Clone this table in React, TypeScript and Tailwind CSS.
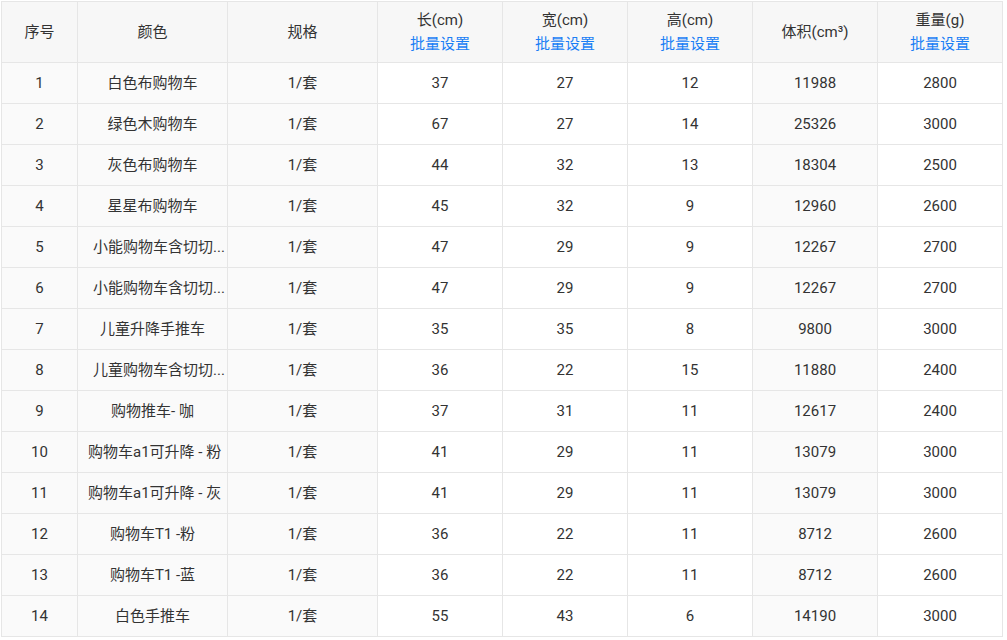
import React from "react";

type Row = {
  id: number;
  name: string;
  length: number;
  width: number;
  height: number;
  volume: number;
  weight: number;
};

const rows: Row[] = [
  { id: 1, name: "白色布购物车", length: 37, width: 27, height: 12, volume: 11988, weight: 2800 },
  { id: 2, name: "绿色木购物车", length: 67, width: 27, height: 14, volume: 25326, weight: 3000 },
  { id: 3, name: "灰色布购物车", length: 44, width: 32, height: 13, volume: 18304, weight: 2500 },
  { id: 4, name: "星星布购物车", length: 45, width: 32, height: 9, volume: 12960, weight: 2600 },
  { id: 5, name: "小能购物车含切切...", length: 47, width: 29, height: 9, volume: 12267, weight: 2700 },
  { id: 6, name: "小能购物车含切切...", length: 47, width: 29, height: 9, volume: 12267, weight: 2700 },
  { id: 7, name: "儿童升降手推车", length: 35, width: 35, height: 8, volume: 9800, weight: 3000 },
  { id: 8, name: "儿童购物车含切切...", length: 36, width: 22, height: 15, volume: 11880, weight: 2400 },
  { id: 9, name: "购物推车- 咖", length: 37, width: 31, height: 11, volume: 12617, weight: 2400 },
  { id: 10, name: "购物车a1可升降 - 粉", length: 41, width: 29, height: 11, volume: 13079, weight: 3000 },
  { id: 11, name: "购物车a1可升降 - 灰", length: 41, width: 29, height: 11, volume: 13079, weight: 3000 },
  { id: 12, name: "购物车T1 -粉", length: 36, width: 22, height: 11, volume: 8712, weight: 2600 },
  { id: 13, name: "购物车T1 -蓝", length: 36, width: 22, height: 11, volume: 8712, weight: 2600 },
  { id: 14, name: "白色手推车", length: 55, width: 43, height: 6, volume: 14190, weight: 3000 },
];

const th = "border border-[#e6e6e6] bg-[#f7f7f7] font-normal text-center align-middle p-0";
const tdGray = "border border-[#e6e6e6] bg-[#fafafa] text-center align-middle p-0";
const tdWhite = "border border-[#e6e6e6] bg-white text-center align-middle p-0";

const BatchLink = () => (
  <div className="text-[#1a7ff5] leading-[24px] cursor-pointer">批量设置</div>
);

export default function App() {
  return (
    <div
      className="w-[1007px] h-[640px] bg-white pt-px pl-px text-[15px] text-[#333333]"
      style={{ fontFamily: 'Roboto, "Noto Sans CJK SC", sans-serif' }}
    >
      <table className="table-fixed border-collapse w-[1001px]">
        <colgroup>
          <col className="w-[76px]" />
          <col className="w-[150px]" />
          <col className="w-[150px]" />
          <col className="w-[125px]" />
          <col className="w-[125px]" />
          <col className="w-[125px]" />
          <col className="w-[125px]" />
          <col className="w-[125px]" />
        </colgroup>
        <thead>
          <tr className="h-[61px]">
            <th className={th}>序号</th>
            <th className={th}>颜色</th>
            <th className={th}>规格</th>
            <th className={th}>
              <div className="leading-[24px]">长(cm)</div>
              <BatchLink />
            </th>
            <th className={th}>
              <div className="leading-[24px]">宽(cm)</div>
              <BatchLink />
            </th>
            <th className={th}>
              <div className="leading-[24px]">高(cm)</div>
              <BatchLink />
            </th>
            <th className={th}>体积(cm³)</th>
            <th className={th}>
              <div className="leading-[24px]">重量(g)</div>
              <BatchLink />
            </th>
          </tr>
        </thead>
        <tbody>
          {rows.map((r) => (
            <tr key={r.id} className="h-[41px]">
              <td className={tdGray}>{r.id}</td>
              <td className={tdGray}>
                <div
                  className={
                    r.name.endsWith("...")
                      ? "whitespace-nowrap pl-[15px] pr-[4px] text-left"
                      : "whitespace-nowrap px-[10px]"
                  }
                >
                  {r.name}
                </div>
              </td>
              <td className={tdGray}>1/套</td>
              <td className={tdWhite}>{r.length}</td>
              <td className={tdWhite}>{r.width}</td>
              <td className={tdWhite}>{r.height}</td>
              <td className={tdGray}>{r.volume}</td>
              <td className={tdWhite}>{r.weight}</td>
            </tr>
          ))}
        </tbody>
      </table>
    </div>
  );
}
